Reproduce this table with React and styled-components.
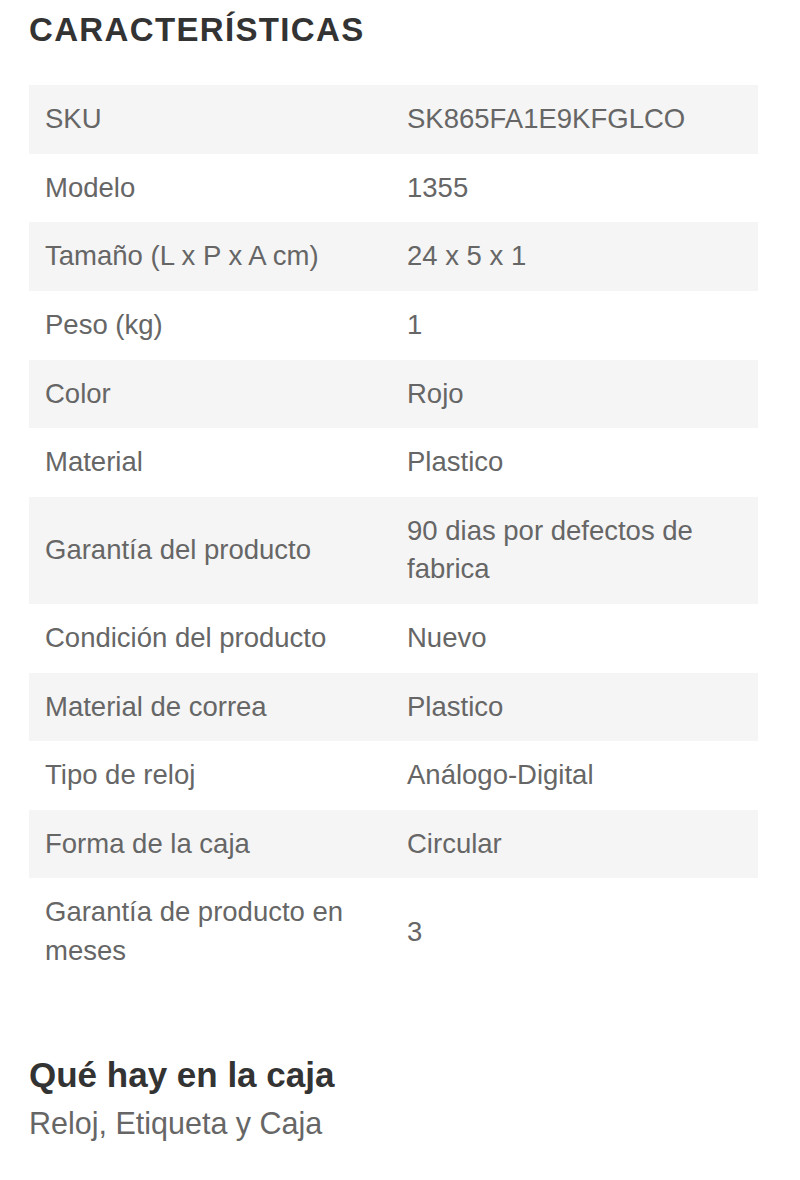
import styled, { createGlobalStyle } from "styled-components";

const GlobalStyle = createGlobalStyle`
  html, body {
    margin: 0;
    padding: 0;
    background: #fff;
  }
  body {
    font-family: "Liberation Sans", Arial, sans-serif;
  }
`;

const Page = styled.div`
  width: 800px;
  box-sizing: border-box;
  padding: 12px 42px 40px 29px;
`;

const Title = styled.h2`
  margin: 0 0 37px;
  font-size: 33px;
  line-height: 1.1;
  font-weight: 700;
  letter-spacing: 1.35px;
  color: #333;
`;

const SpecTable = styled.table`
  width: 729px;
  border-collapse: collapse;
  table-layout: fixed;
  font-size: 27.5px;
  line-height: 38.6px;
  color: #666;

  col.label {
    width: 362px;
  }
`;

const Row = styled.tr`
  background: ${(p) => (p.$shaded ? "#f5f5f5" : "#fff")};
`;

const Cell = styled.td`
  padding: 15px 16px;
  vertical-align: middle;
`;

const BoxTitle = styled.h3`
  margin: 70px 0 8px;
  font-size: 35px;
  line-height: 1.1;
  font-weight: 700;
  color: #333;
`;

const BoxText = styled.p`
  margin: 0;
  font-size: 30.5px;
  line-height: 1.42857;
  color: #666;
`;

const specs = [
  ["SKU", "SK865FA1E9KFGLCO"],
  ["Modelo", "1355"],
  ["Tamaño (L x P x A cm)", "24 x 5 x 1"],
  ["Peso (kg)", "1"],
  ["Color", "Rojo"],
  ["Material", "Plastico"],
  ["Garantía del producto", "90 dias por defectos de fabrica"],
  ["Condición del producto", "Nuevo"],
  ["Material de correa", "Plastico"],
  ["Tipo de reloj", "Análogo-Digital"],
  ["Forma de la caja", "Circular"],
  ["Garantía de producto en meses", "3"],
];

export default function App() {
  return (
    <>
      <GlobalStyle />
      <Page>
        <Title>CARACTERÍSTICAS</Title>
        <SpecTable>
          <colgroup>
            <col className="label" />
            <col />
          </colgroup>
          <tbody>
            {specs.map(([label, value], i) => (
              <Row key={label} $shaded={i % 2 === 0}>
                <Cell>{label}</Cell>
                <Cell>{value}</Cell>
              </Row>
            ))}
          </tbody>
        </SpecTable>
        <BoxTitle>Qué hay en la caja</BoxTitle>
        <BoxText>Reloj, Etiqueta y Caja</BoxText>
      </Page>
    </>
  );
}
